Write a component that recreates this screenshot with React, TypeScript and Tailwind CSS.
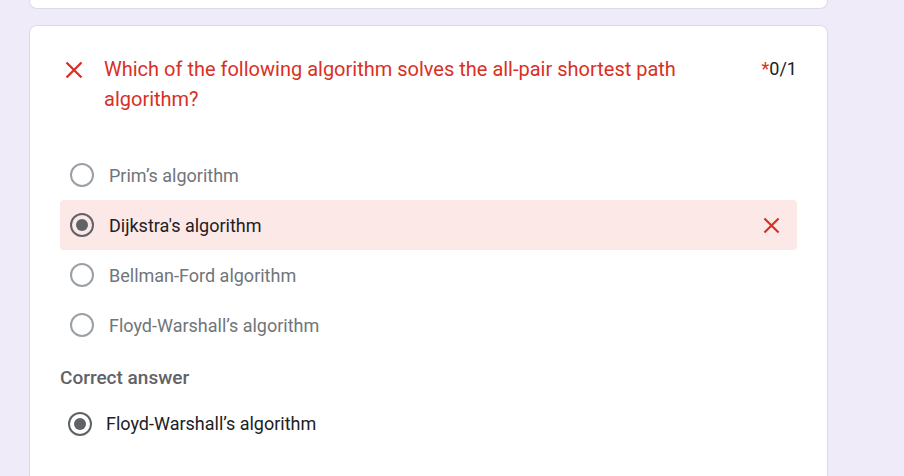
const OPTIONS = [
    { label: 'Prim’s algorithm', picked: false },
    { label: "Dijkstra's algorithm", picked: true },
    { label: 'Bellman-Ford algorithm', picked: false },
    { label: 'Floyd-Warshall’s algorithm', picked: false },
]

const Cross = ({ size }: { size: number }) => (
    <svg width={size} height={size} viewBox="0 0 18 18" className="shrink-0">
        <path d="M1.5 1.5 L16.5 16.5 M16.5 1.5 L1.5 16.5" stroke="#d93025" strokeWidth={2.3} strokeLinecap="butt" />
    </svg>
)

const Radio = ({ checked }: { checked: boolean }) => (
    <span
        className={`flex h-6 w-6 shrink-0 items-center justify-center rounded-full border-[2.5px] ${
            checked ? 'border-[#5f6368]' : 'border-[#9aa0a6]'
        }`}
    >
        {checked && <span className="h-3 w-3 rounded-full bg-[#5f6368]" />}
    </span>
)

export default function App() {
    return (
        <div
            className="h-[476px] w-[904px] overflow-hidden bg-[#efebf8] pl-[29px]"
            style={{ fontFamily: 'Roboto, Arial, sans-serif' }}
        >
            {/* previous card, mostly scrolled away */}
            <div className="h-[9px] w-[799px] rounded-b-lg border border-t-0 border-[#dadce0] bg-white" />

            <div className="mt-4 w-[799px] rounded-lg border border-[#dadce0] bg-white px-[30px] pt-[28px] pb-24">
                {/* Question header */}
                <div className="flex items-start">
                    <div className="mt-[7px] ml-[5px]">
                        <Cross size={18} />
                    </div>
                    <div className="ml-[21px] flex-1 pr-8 text-[20px] leading-[30px] text-[#d93025]">
                        Which of the following algorithm solves the all-pair shortest path algorithm?
                    </div>
                    <div className="text-[18px] leading-[30px] text-[#202124]">
                        <span className="text-[#d93025]">*</span>0/1
                    </div>
                </div>

                {/* Options */}
                <div className="mt-[36px] flex flex-col">
                    {OPTIONS.map(({ label, picked }) => (
                        <div
                            key={label}
                            className={`flex h-[50px] items-center rounded pl-[10px] pr-[17px] ${
                                picked ? 'bg-[#fce8e6]' : ''
                            }`}
                        >
                            <Radio checked={picked} />
                            <span
                                className={`ml-[15px] flex-1 text-[18px] ${
                                    picked ? 'text-[#202124]' : 'text-[#70757a]'
                                }`}
                            >
                                {label}
                            </span>
                            {picked && <Cross size={17} />}
                        </div>
                    ))}
                </div>

                <div className="mt-[16px] text-[19px] leading-6 font-medium text-[#5f6368]">Correct answer</div>

                <div className="mt-[20px] flex items-center pl-[8px]">
                    <Radio checked />
                    <span className="ml-[14px] text-[18px] text-[#202124]">Floyd-Warshall’s algorithm</span>
                </div>
            </div>
        </div>
    )
}
